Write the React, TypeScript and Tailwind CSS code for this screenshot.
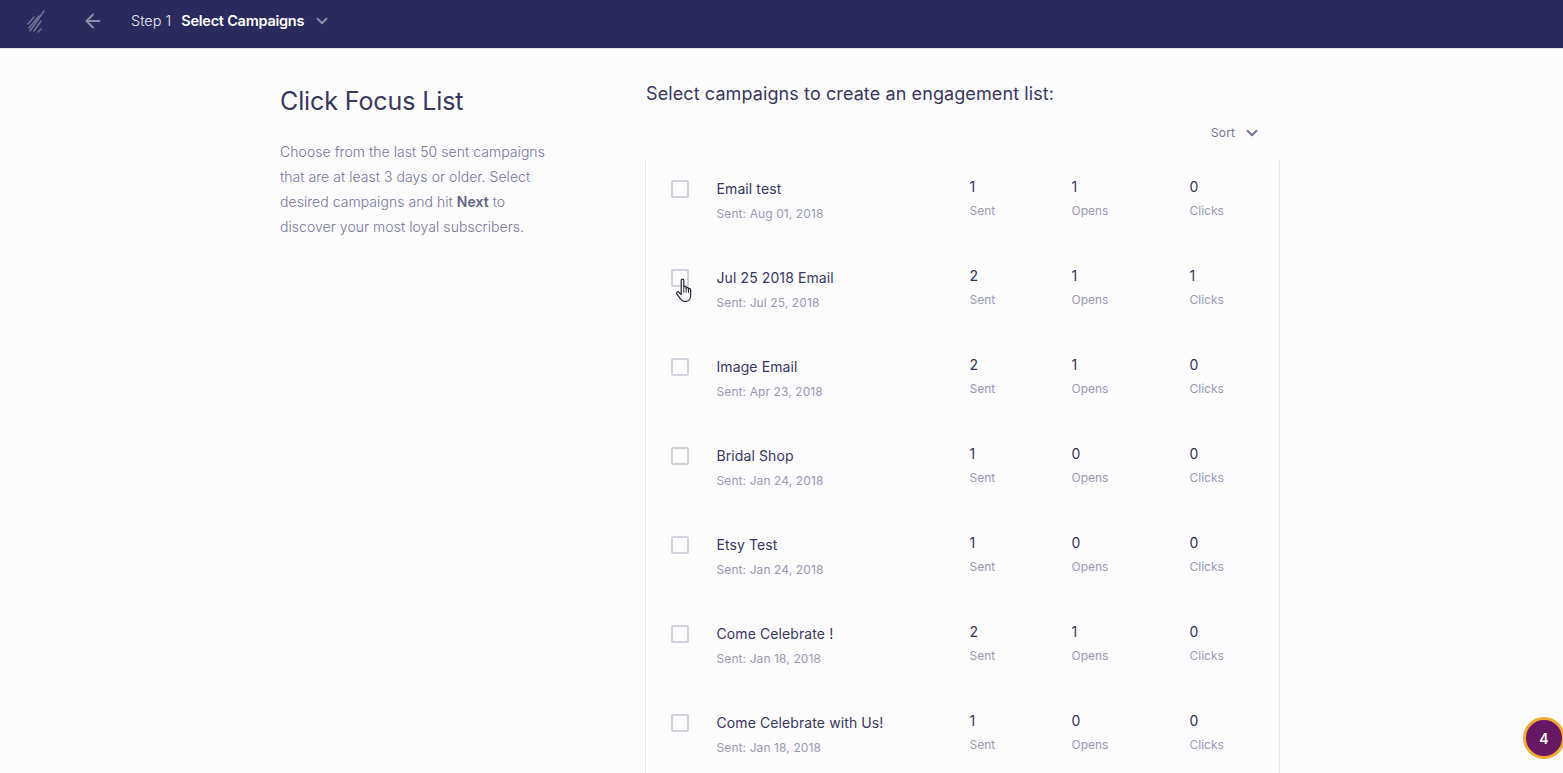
import { ArrowLeft, ChevronDown } from "lucide-react";

const campaigns = [
  { name: "Email test", date: "Aug 01, 2018", sent: 1, opens: 1, clicks: 0 },
  { name: "Jul 25 2018 Email", date: "Jul 25, 2018", sent: 2, opens: 1, clicks: 1, hover: true },
  { name: "Image Email", date: "Apr 23, 2018", sent: 2, opens: 1, clicks: 0 },
  { name: "Bridal Shop", date: "Jan 24, 2018", sent: 1, opens: 0, clicks: 0 },
  { name: "Etsy Test", date: "Jan 24, 2018", sent: 1, opens: 0, clicks: 0 },
  { name: "Come Celebrate !", date: "Jan 18, 2018", sent: 2, opens: 1, clicks: 0 },
  { name: "Come Celebrate with Us!", date: "Jan 18, 2018", sent: 1, opens: 0, clicks: 0 },
];

function Logo() {
  return (
    <svg width="20" height="24" viewBox="0 0 20 24" fill="none" stroke="#77759a" strokeWidth="1.4" strokeLinecap="round">
      <path d="M2 15 L8 8" />
      <path d="M3 19 L13 7" />
      <path d="M4 22 L18 2" />
      <path d="M8 22 L15 12" />
      <path d="M12 23 L15 20" />
    </svg>
  );
}

function HandCursor() {
  return (
    <svg width="20" height="26" viewBox="0 0 18 24" className="absolute left-[2px] top-[7px]">
      <path
        d="M5.5 2.2c0-1.5 2.4-1.5 2.4 0v6.4c0-1.2 2.2-1.2 2.2 0v1c0-1.1 2.1-1.1 2.1 0v.9c0-1 2-1 2 .2v5.6c0 2.6-1.6 5.2-4.4 5.2H8.4c-1.7 0-2.6-.9-3.4-2L1.4 14.6c-.8-1.4 1-2.6 2.1-1.4l2 2.2z"
        fill="#fff"
        stroke="#22223a"
        strokeWidth="1.1"
        strokeLinejoin="round"
      />
      <path d="M7.9 9v4.5M10.1 9.6v4M12.2 10.5v3.2" stroke="#22223a" strokeWidth="0.9" fill="none" />
    </svg>
  );
}

function Stat({ value, label, className }: { value: number; label: string; className: string }) {
  return (
    <div className={className}>
      <div className="text-[14px] leading-[20px] text-[#33325a]">{value}</div>
      <div className="mt-[5px] text-[12px] leading-[18px] text-[#9a9ab3]">{label}</div>
    </div>
  );
}

export default function App() {
  return (
    <div
      className="relative h-[773px] w-full overflow-hidden bg-[#fcfcfc]"
      style={{ fontFamily: "Inter, 'Noto Sans', sans-serif" }}
    >
      <header className="flex h-[49px] items-center border-b border-[#e6e6ea] bg-[#2b2a5e] pb-[7px] pl-[26px]">
        <Logo />
        <ArrowLeft size={22} strokeWidth={2.2} className="ml-[36px] text-[#8d8cab]" />
        <span className="ml-[27px] text-[14.5px] font-light text-[#e8e8f2]">Step 1</span>
        <span className="ml-[10px] text-[14.5px] font-semibold tracking-[-0.25px] text-white">Select Campaigns</span>
        <ChevronDown size={18} strokeWidth={2.6} className="ml-[9px] text-[#8d8cab]" />
      </header>

      <main className="flex pl-[280px]">
        <aside className="w-[366px] shrink-0 pt-[36px]">
          <h1 className="text-[25px] leading-[32px] tracking-[-0.1px] text-[#38375e]">Click Focus List</h1>
          <p className="mt-[22px] w-[272px] text-[14px] font-light leading-[25px] tracking-[0.05px] text-[#77769a]">
            Choose from the last 50 sent campaigns that are at least 3 days or older. Select desired campaigns and hit{" "}
            <b className="font-semibold text-[#65648a]">Next</b> to discover your most loyal subscribers.
          </p>
        </aside>

        <section className="w-[634px]">
          <h2 className="pt-[33px] text-[18px] leading-[24px] tracking-[0.1px] text-[#38375e]">
            Select campaigns to create an engagement list:
          </h2>
          <div className="mb-[14px] mt-[14px] flex h-[26px] items-center justify-end pr-[19px] text-[12px] tracking-[0.1px] text-[#77769a]">
            Sort
            <ChevronDown size={18} strokeWidth={2.6} className="ml-[8px] text-[#77769a]" />
          </div>
          <div className="-ml-px border-x border-[#e8e8ec]">
            {campaigns.map((c) => (
              <div key={c.name} className="flex h-[89px] pt-[17px]">
                <div className="relative ml-[25px] mt-[3px] h-[18px] w-[18px] rounded-[2px] border-2 border-[#d2d2da]">
                  {c.hover && <HandCursor />}
                </div>
                <div className="ml-[27.5px] w-[253px] pt-[2px]">
                  <div className="text-[14px] leading-[20px] tracking-[0.1px] text-[#38375e]">{c.name}</div>
                  <div className="mt-[6px] text-[12px] leading-[18px] tracking-[0.1px] text-[#9a9ab3]">Sent: {c.date}</div>
                </div>
                <Stat value={c.sent} label="Sent" className="w-[102px]" />
                <Stat value={c.opens} label="Opens" className="w-[118px]" />
                <Stat value={c.clicks} label="Clicks" className="w-[70px]" />
              </div>
            ))}
          </div>
        </section>
      </main>

      <div className="absolute left-[1523px] top-[717px] flex h-[42px] w-[42px] items-center justify-center rounded-full border-[3px] border-[#f5a932] bg-[#671863] text-[14px] font-semibold text-white">
        4
      </div>
    </div>
  );
}
